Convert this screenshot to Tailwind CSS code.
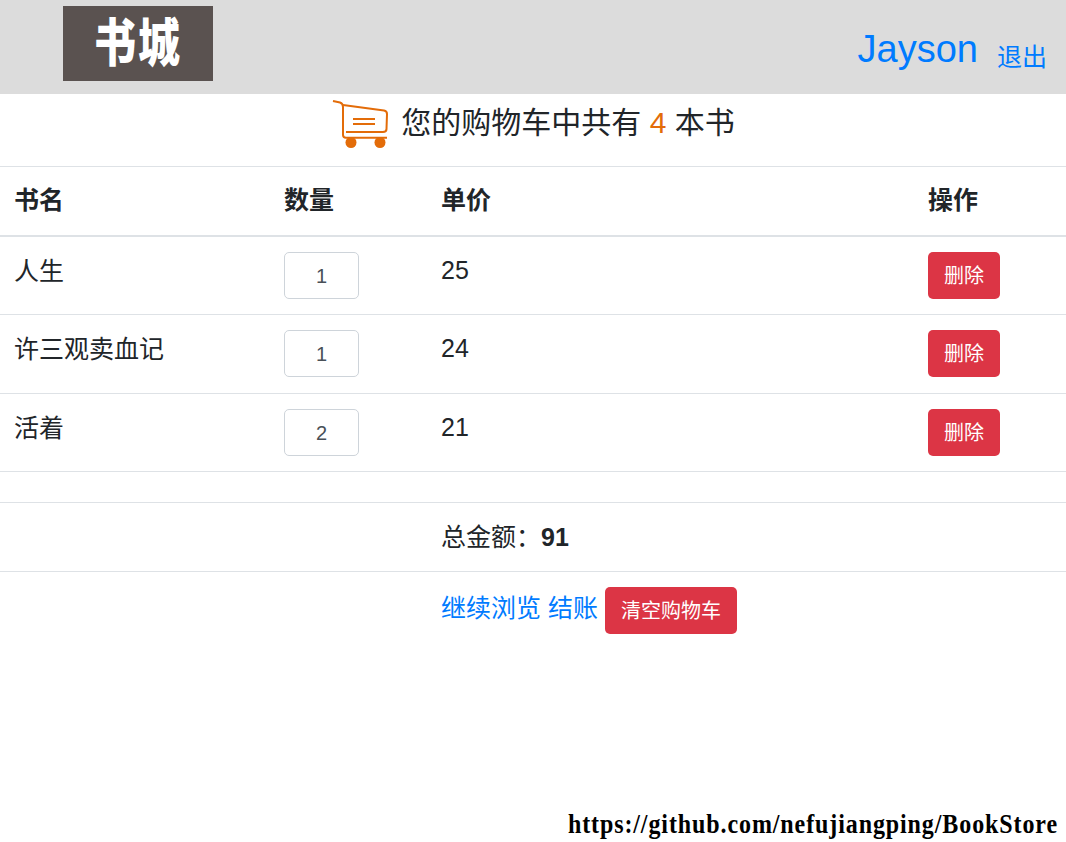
<!DOCTYPE html>
<html>
<head>
    <meta charset="utf-8">
    <title>购物车</title>
    <script src="https://cdn.jsdelivr.net/npm/@tailwindcss/browser@4"></script>
</head>
<body class="relative h-[842px] overflow-hidden bg-white text-[25px] leading-[37.5px] text-[#212529] font-['Liberation_Sans','Noto_Sans_CJK_SC',sans-serif]">
    <!-- header -->
    <nav class="flex h-[94px] items-start justify-between bg-[#dcdcdc]">
        <div class="ml-[63px] mt-[6px] flex h-[75px] w-[150px] items-center justify-center bg-[#5a5250] text-[42px] font-black text-white">
            <span class="block scale-y-125 whitespace-nowrap leading-none tracking-[2px]">书城</span>
        </div>
        <div class="mr-[19px] mt-[25px] flex items-start gap-[19px] text-[#007bff]">
            <a href="#" class="text-[38px] leading-[48px]">Jayson</a>
            <a href="#" class="mt-[8px] text-[25px] leading-[48px]">退出</a>
        </div>
    </nav>

    <!-- cart summary -->
    <div class="flex h-[72px] items-start justify-center pl-[1px]">
        <svg class="mt-[5px] h-[50px] w-[56px]" viewBox="0 0 56 50" fill="none" stroke="#e36c09" stroke-width="2">
            <path d="M1 2 L8 3.5 Q11 4.5 11 8 L11 36 Q11 38.7 14 38.7 L55 38.7" />
            <path d="M11 6 L52 11.5 Q55 12 55 15 L54.5 30 Q54.5 33 51 33 L14 33" />
            <path d="M21 20 H43 M21 25 H43" />
            <circle cx="19" cy="43.5" r="5.5" fill="#e36c09" stroke="none" />
            <circle cx="48" cy="43.5" r="5.5" fill="#e36c09" stroke="none" />
        </svg>
        <h2 class="ml-[13px] mt-[6px] text-[30px] leading-[45px]">您的购物车中共有 <span class="text-[#e36c09]">4</span> 本书</h2>
    </div>

    <!-- cart table -->
    <table class="w-full table-fixed">
        <colgroup>
            <col class="w-[269px]">
            <col class="w-[157px]">
            <col class="w-[487px]">
            <col class="w-[153px]">
        </colgroup>
        <thead>
            <tr class="h-[69px] border-y border-[#dee2e6] border-b-2 text-left">
                <th class="pl-[14px] pr-[15px] font-bold">书名</th>
                <th class="px-[15px] font-bold">数量</th>
                <th class="px-[15px] font-bold">单价</th>
                <th class="px-[15px] font-bold">操作</th>
            </tr>
        </thead>
        <tbody>
            <tr class="border-b border-[#dee2e6]">
                <td class="py-[15px] pl-[14px] pr-[15px] align-top"><span class="relative top-[1px]">人生</span></td>
                <td class="p-[15px] align-top"><input value="1" class="h-[47px] w-[75px] rounded-[5px] border border-[#ced4da] pt-[2px] text-center text-[20px] text-[#495057]"></td>
                <td class="p-[15px] align-top">25</td>
                <td class="p-[15px] align-top"><button class="h-[47px] w-[72px] rounded-[5px] bg-[#dc3545] pt-[2px] text-[20px] leading-[30px] text-white">删除</button></td>
            </tr>
            <tr class="h-[79px] border-b border-[#dee2e6]">
                <td class="py-[15px] pl-[14px] pr-[15px] align-top"><span class="relative top-[1px]">许三观卖血记</span></td>
                <td class="p-[15px] align-top"><input value="1" class="h-[47px] w-[75px] rounded-[5px] border border-[#ced4da] pt-[2px] text-center text-[20px] text-[#495057]"></td>
                <td class="p-[15px] align-top">24</td>
                <td class="p-[15px] align-top"><button class="h-[47px] w-[72px] rounded-[5px] bg-[#dc3545] pt-[2px] text-[20px] leading-[30px] text-white">删除</button></td>
            </tr>
            <tr class="border-b border-[#dee2e6]">
                <td class="py-[15px] pl-[14px] pr-[15px] align-top"><span class="relative top-[1px]">活着</span></td>
                <td class="p-[15px] align-top"><input value="2" class="h-[47px] w-[75px] rounded-[5px] border border-[#ced4da] pt-[2px] text-center text-[20px] text-[#495057]"></td>
                <td class="p-[15px] align-top">21</td>
                <td class="p-[15px] align-top"><button class="h-[47px] w-[72px] rounded-[5px] bg-[#dc3545] pt-[2px] text-[20px] leading-[30px] text-white">删除</button></td>
            </tr>
            <tr class="h-[31px] border-b border-[#dee2e6]"><td colspan="4"></td></tr>
            <tr class="h-[69px] border-b border-[#dee2e6]">
                <td></td>
                <td></td>
                <td class="px-[15px] pb-[14px] pt-[16px] align-top" colspan="2">总金额：<strong class="font-bold">91</strong></td>
            </tr>
            <tr>
                <td></td>
                <td></td>
                <td class="p-[15px] align-top" colspan="2">
                    <div class="flex items-start">
                        <a href="#" class="mt-[3px] text-[#007bff]">继续浏览</a>
                        <a href="#" class="ml-[7px] mt-[3px] text-[#007bff]">结账</a>
                        <button class="ml-[7px] h-[47px] w-[132px] rounded-[5px] bg-[#dc3545] pt-[2px] text-[20px] leading-[30px] text-white">清空购物车</button>
                    </div>
                </td>
            </tr>
        </tbody>
    </table>

    <!-- watermark -->
    <div class="absolute right-[8px] top-[811px] origin-bottom scale-y-[1.15] font-['Liberation_Serif',serif] text-[24px] font-bold leading-[30px] tracking-[0.9px] text-black">https://github.com/nefujiangping/BookStore</div>
</body>
</html>
